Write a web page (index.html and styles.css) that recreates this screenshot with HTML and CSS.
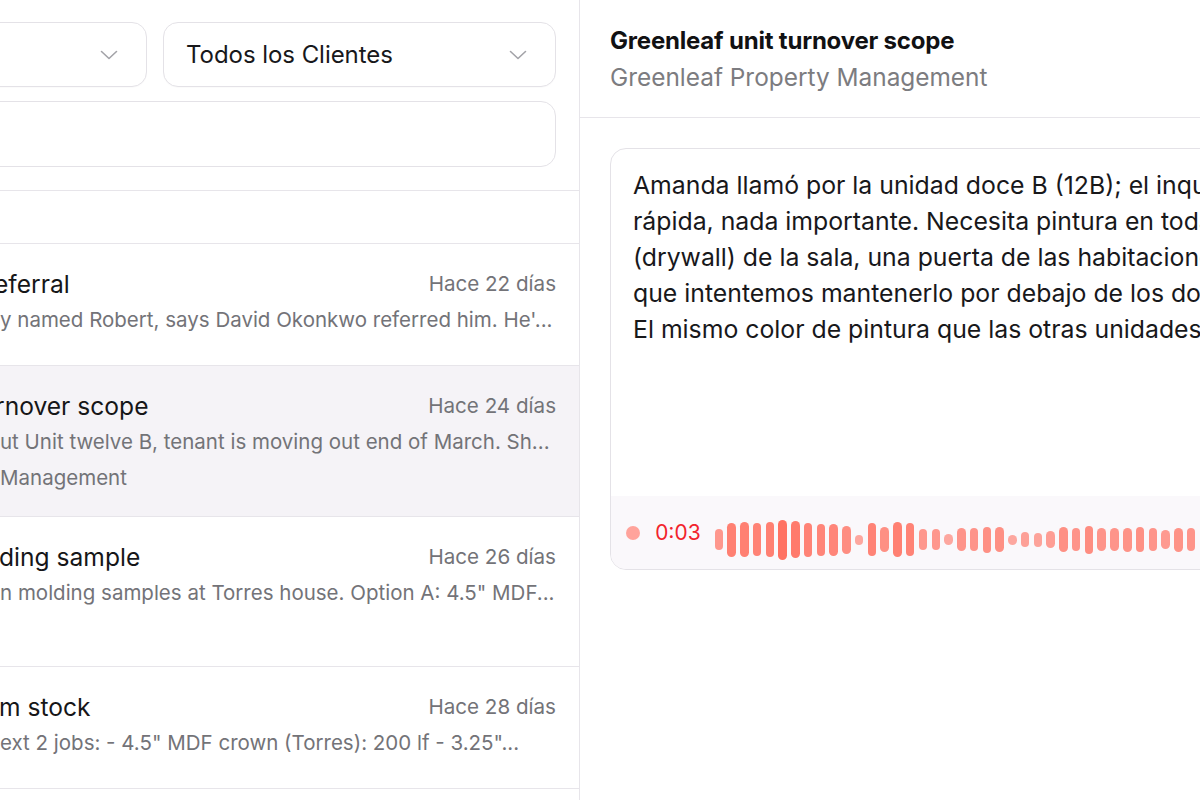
FILE: index.html
```html
<!DOCTYPE html>
<html lang="es">
<head>
<meta charset="utf-8">
<title>Notas</title>
<link rel="stylesheet" href="styles.css">
</head>
<body>
<div class="app">
  <aside class="sidebar">
    <div class="filters">
      <div class="filters-inner">
        <div class="select-row">
          <div class="select">
            <span class="select-label">Todos los Estados</span>
            <svg class="chevron" viewBox="0 0 18 10" width="18" height="10"><path d="M1.5 1.5l7.5 7 7.5-7"/></svg>
          </div>
          <div class="select">
            <span class="select-label">Todos los Clientes</span>
            <svg class="chevron" viewBox="0 0 18 10" width="18" height="10"><path d="M1.5 1.5l7.5 7 7.5-7"/></svg>
          </div>
        </div>
        <div class="search">
          <span class="search-placeholder">Buscar notas...</span>
        </div>
      </div>
    </div>
    <div class="list-head"></div>
    <ul class="notes">
      <li class="note note--short">
        <div class="note-top"><span class="note-title note-title--cut">eferral</span><span class="note-time">Hace 22 días</span></div>
        <div class="note-preview">y named Robert, says David Okonkwo referred him. He'...</div>
      </li>
      <li class="note is-selected">
        <div class="note-top"><span class="note-title note-title--nudge">rnover scope</span><span class="note-time">Hace 24 días</span></div>
        <div class="note-preview">ut Unit twelve B, tenant is moving out end of March. Sh...</div>
        <div class="note-client">Management</div>
      </li>
      <li class="note">
        <div class="note-top"><span class="note-title">ding sample</span><span class="note-time">Hace 26 días</span></div>
        <div class="note-preview">n molding samples at Torres house. Option A: 4.5" MDF...</div>
        <div class="note-client">&nbsp;</div>
      </li>
      <li class="note note--short">
        <div class="note-top"><span class="note-title">m stock</span><span class="note-time">Hace 28 días</span></div>
        <div class="note-preview">ext 2 jobs: - 4.5" MDF crown (Torres): 200 lf - 3.25"...</div>
      </li>
      <li class="note note--short">
        <div class="note-top"><span class="note-title">&nbsp;</span><span class="note-time">&nbsp;</span></div>
      </li>
    </ul>
  </aside>

  <main class="detail">
    <header class="detail-head">
      <h1 class="detail-title">Greenleaf unit turnover scope</h1>
      <div class="detail-client">Greenleaf Property Management</div>
    </header>
    <section class="detail-body">
      <div class="card">
        <div class="card-text">Amanda llamó por la unidad doce B (12B); el inquilino se muda a finales de marzo. Quiere una rotación<br>rápida, nada importante. Necesita pintura en todas partes, reparar el panel de yeso<br>(drywall) de la sala, una puerta de las habitaciones hay que reemplazarla. Pidió<br>que intentemos mantenerlo por debajo de los dos mil dólares si es posible.<br>El mismo color de pintura que las otras unidades: Agreeable Gray.</div>
        <div class="card-foot">
          <span class="rec-dot"></span>
          <span class="rec-time">0:03</span>
          <div class="wave">
            <i style="height:21px;opacity:.72"></i>
            <i style="height:34px;opacity:.9"></i>
            <i style="height:35px;opacity:.9"></i>
            <i style="height:33px;opacity:.88"></i>
            <i style="height:35px;opacity:.9"></i>
            <i style="height:40px;opacity:1"></i>
            <i style="height:37px;opacity:.94"></i>
            <i style="height:34px;opacity:.88"></i>
            <i style="height:32px;opacity:.86"></i>
            <i style="height:32px;opacity:.86"></i>
            <i style="height:28px;opacity:.8"></i>
            <i style="height:10px;opacity:.6"></i>
            <i style="height:33px;opacity:.88"></i>
            <i style="height:25px;opacity:.78"></i>
            <i style="height:35px;opacity:.9"></i>
            <i style="height:33px;opacity:.88"></i>
            <i style="height:21px;opacity:.72"></i>
            <i style="height:21px;opacity:.72"></i>
            <i style="height:11px;opacity:.6"></i>
            <i style="height:23px;opacity:.74"></i>
            <i style="height:23px;opacity:.74"></i>
            <i style="height:26px;opacity:.78"></i>
            <i style="height:25px;opacity:.78"></i>
            <i style="height:10px;opacity:.6"></i>
            <i style="height:15px;opacity:.66"></i>
            <i style="height:14px;opacity:.64"></i>
            <i style="height:17px;opacity:.68"></i>
            <i style="height:25px;opacity:.78"></i>
            <i style="height:23px;opacity:.74"></i>
            <i style="height:28px;opacity:.8"></i>
            <i style="height:23px;opacity:.74"></i>
            <i style="height:23px;opacity:.74"></i>
            <i style="height:24px;opacity:.76"></i>
            <i style="height:25px;opacity:.78"></i>
            <i style="height:23px;opacity:.74"></i>
            <i style="height:19px;opacity:.7"></i>
            <i style="height:24px;opacity:.76"></i>
            <i style="height:23px;opacity:.74"></i>
            <i style="height:22px;opacity:.74"></i>
            <i style="height:26px;opacity:.78"></i>
            <i style="height:18px;opacity:.7"></i>
            <i style="height:24px;opacity:.76"></i>
          </div>
        </div>
      </div>
    </section>
  </main>
</div>
</body>
</html>
```

FILE: styles.css
```css
* { box-sizing: border-box; }

html, body {
  margin: 0;
  padding: 0;
  height: 100%;
}

body {
  font-family: Inter, "Noto Sans", "Liberation Sans", sans-serif;
  color: #18181b;
  background: #ffffff;
  overflow: hidden;
}

.app {
  display: flex;
  height: 800px;
  width: 1900px;
}

/* ---------- sidebar ---------- */
.sidebar {
  flex: none;
  width: 580px;
  border-right: 1px solid #e7e5ea;
  overflow: hidden;
  display: flex;
  flex-direction: column;
}

.filters {
  padding: 22px 23px 23px 23px;
  border-bottom: 1px solid #e7e5ea;
}

.filters-inner {
  margin-left: -269px;
  display: flex;
  flex-direction: column;
  gap: 14px;
}

.select-row {
  display: grid;
  grid-template-columns: 1fr 1fr;
  gap: 16px;
}

.select {
  height: 65px;
  border: 1px solid #e4e2e7;
  border-radius: 15px;
  background: #fff;
  display: flex;
  align-items: center;
  justify-content: space-between;
  padding: 0 28px 0 22px;
  box-shadow: 0 1px 1px rgba(0,0,0,0.02);
}

.select-label {
  font-size: 24px;
  color: #18181b;
  letter-spacing: -0.05px;
}

.chevron {
  fill: none;
  stroke: #a3a3a8;
  stroke-width: 1.6;
  stroke-linecap: round;
  stroke-linejoin: round;
}

.search {
  height: 66px;
  border: 1px solid #e4e2e7;
  border-radius: 15px;
  display: flex;
  align-items: center;
  padding: 0 22px;
}

.search-placeholder {
  font-size: 22px;
  color: #a1a1a6;
}

.list-head {
  height: 53px;
  border-bottom: 1px solid #e7e5ea;
  flex: none;
}

.notes {
  list-style: none;
  margin: 0;
  padding: 0;
}

.note {
  padding: 22px 23px 22px 0;
  border-bottom: 1px solid #e7e5ea;
}

.note--short {
  padding-bottom: 30px;
}

.note.is-selected {
  background: #f5f3f7;
  padding-bottom: 23px;
}

.note-top {
  display: flex;
  justify-content: space-between;
  align-items: center;
  height: 36px;
}

.note-title {
  font-size: 24.6px;
  line-height: 36px;
  color: #161618;
  margin-left: -1px;
  white-space: nowrap;
}

.note-title--cut {
  margin-left: -6px;
}

.note-title--nudge {
  margin-left: -5px;
}

.note-time {
  font-size: 20.6px;
  line-height: 36px;
  color: #737378;
  white-space: nowrap;
}

.note-preview {
  margin-top: 3px;
  font-size: 20.5px;
  line-height: 30px;
  color: #737378;
  white-space: nowrap;
}

.note-client {
  margin-top: 6px;
  font-size: 20.5px;
  line-height: 30px;
  color: #737378;
  white-space: nowrap;
}

/* ---------- detail ---------- */
.detail {
  flex: none;
  width: 1200px;
  display: flex;
  flex-direction: column;
}

.detail-head {
  padding: 23px 30px 22px;
  border-bottom: 1px solid #e7e5ea;
}

.detail-title {
  margin: 0;
  font-size: 24px;
  font-weight: 700;
  line-height: 36px;
  letter-spacing: -0.2px;
  color: #111113;
}

.detail-client {
  font-size: 24.4px;
  line-height: 36px;
  color: #7c7c80;
}

.detail-body {
  padding: 30px;
}

.card {
  width: 1100px;
  border: 1px solid #e4e2e7;
  border-radius: 16px;
  overflow: hidden;
  background: #fff;
}

.card-text {
  height: 347px;
  padding: 18px 22px 0;
  font-size: 24.8px;
  line-height: 36px;
  color: #18181b;
  white-space: nowrap;
}

.card-foot {
  height: 73px;
  background: #faf8fb;
  display: flex;
  align-items: center;
  padding: 0 15px;
  gap: 15px;
}

.rec-dot {
  width: 14px;
  height: 14px;
  border-radius: 50%;
  background: #ffa39b;
  flex: none;
}

.rec-time {
  font-size: 21px;
  color: #f2242c;
  font-variant-numeric: tabular-nums;
}

.wave {
  display: flex;
  align-items: center;
  gap: 4.27px;
  height: 44px;
  margin-top: 14px;
  margin-left: -2px;
}

.wave i {
  display: block;
  width: 8.5px;
  border-radius: 5px;
  background: #ff7263;
  flex: none;
}
```
